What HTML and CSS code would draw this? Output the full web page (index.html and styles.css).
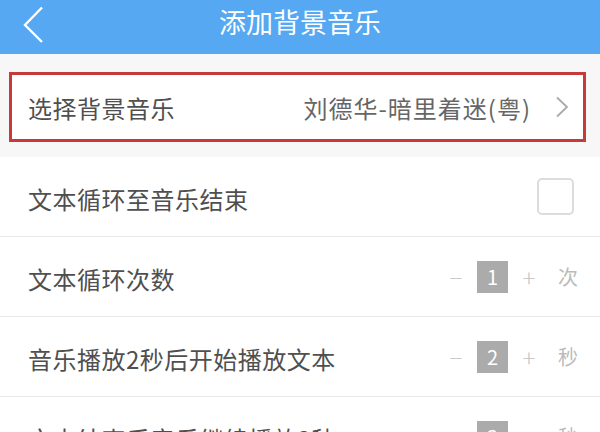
FILE: index.html
```html
<!DOCTYPE html>
<html lang="zh-CN">
  <head>
    <meta charset="UTF-8" />
    <meta name="viewport" content="width=device-width, initial-scale=1.0" />
    <title>添加背景音乐</title>
    <link rel="stylesheet" href="styles.css">
  </head>
  <body>
    <header class="topbar">
      <a class="back" href="#">
        <svg width="22" height="37" viewBox="0 0 22 37">
          <path d="M20 1.5 L3 19 L20 36" fill="none" stroke="#fff" stroke-width="2.4" />
        </svg>
      </a>
      <h1 class="title">添加背景音乐</h1>
      <span></span>
    </header>

    <div class="pick-wrap">
      <div class="pick">
        <span class="label">选择背景音乐</span>
        <span class="value">刘德华-暗里着迷(粤)</span>
        <svg class="arrow" width="14" height="22" viewBox="0 0 14 22">
          <path d="M2 1.5 L12 11 L2 20.5" fill="none" stroke="#a9a9a9" stroke-width="1.8" />
        </svg>
      </div>
    </div>

    <ul class="options">
      <li class="row">
        <span class="label">文本循环至音乐结束</span>
        <span class="checkbox"></span>
      </li>
      <li class="row">
        <span class="label">文本循环次数</span>
        <div class="stepper">
          <span class="sign">−</span>
          <span class="num">1</span>
          <span class="sign">+</span>
          <span class="unit">次</span>
        </div>
      </li>
      <li class="row">
        <span class="label">音乐播放2秒后开始播放文本</span>
        <div class="stepper">
          <span class="sign">−</span>
          <span class="num">2</span>
          <span class="sign">+</span>
          <span class="unit">秒</span>
        </div>
      </li>
      <li class="row">
        <span class="label">文本结束后音乐继续播放3秒</span>
        <div class="stepper">
          <span class="sign">−</span>
          <span class="num">3</span>
          <span class="sign">+</span>
          <span class="unit">秒</span>
        </div>
      </li>
    </ul>
  </body>
</html>
```

FILE: styles.css
```css
body {
  font-family: "Noto Sans CJK SC", "Noto Sans", sans-serif;
  margin: 0;
  height: 432px;
  overflow: hidden;
  background-color: #f2f2f2;
  color: #4f4f4f;
}
.topbar {
  height: 54px;
  background-color: #56a8f2;
  display: grid;
  grid-template-columns: 1fr auto 1fr;
  align-items: center;
  padding-bottom: 10px;
  box-sizing: border-box;
}
.back {
  display: flex;
  padding-left: 22px;
  margin-top: 4px;
}
.title {
  margin: 0;
  font-size: 27px;
  font-weight: 400;
  color: #fff;
  line-height: 1;
  margin-top: -2px;
}
.pick-wrap {
  padding: 18px 14px 15px 9px;
  background-color: #f7f7f7;
}
.pick {
  height: 64px;
  border: 3px solid #c63a3a;
  background-color: #fff;
  display: flex;
  align-items: center;
  padding: 0 14px 0 16px;
  font-size: 24px;
}
.pick .label {
  flex: 1;
  letter-spacing: 0.5px;
}
.pick .value {
  color: #666;
  margin-right: 24px;
  letter-spacing: 1px;
}
.options {
  list-style: none;
  margin: 0;
  padding: 0;
  background-color: #fff;
}
.row {
  height: 79px;
  border-bottom: 1px solid #e8e8e8;
  display: flex;
  align-items: center;
  justify-content: space-between;
  padding: 0 26px 0 28px;
  font-size: 24px;
}
.row .label {
  padding-top: 3px;
  letter-spacing: 0.5px;
}
.checkbox {
  width: 33px;
  height: 33px;
  border: 2px solid #dcdcdc;
  border-radius: 5px;
}
.stepper {
  display: flex;
  align-items: center;
  margin-right: -4px;
}
.sign {
  width: 18px;
  text-align: center;
  color: #c8c8c8;
  font-size: 24px;
  font-weight: 300;
}
.num {
  width: 31px;
  height: 32px;
  margin: 0 12px;
  background-color: #ababab;
  color: #fff;
  font-size: 20px;
  display: flex;
  align-items: center;
  justify-content: center;
}
.unit {
  margin-left: 20px;
  color: #bbb;
  font-size: 20px;
}
```
